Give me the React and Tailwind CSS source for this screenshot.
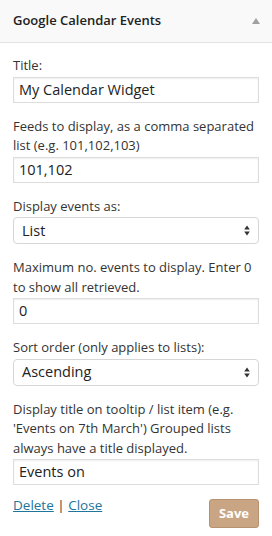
import React from "react";

const SelectArrows = () => (
  <svg width="6" height="11" viewBox="0 0 6 11" className="text-[#333]">
    <path d="M3 0.5 L5.8 4.5 L0.2 4.5 Z" fill="currentColor" />
    <path d="M3 10.5 L5.8 6.5 L0.2 6.5 Z" fill="currentColor" />
  </svg>
);

// labels keep the line breaks of the original widget
const Field = ({ lines, children }) => (
  <div className="mb-[14px]">
    <label className="block text-[13px] leading-[19.5px] text-[#333] mb-[1px] whitespace-nowrap">
      {lines.map((l, i) => (
        <span key={i} className="block">{l}</span>
      ))}
    </label>
    {children}
  </div>
);

const TextInput = ({ value }) => (
  <div className="h-[26px] border border-[#dddddd] bg-white px-[5px] flex items-center text-[14.5px] text-[#222] shadow-[inset_0_1px_2px_rgba(0,0,0,0.07)]">
    {value}
  </div>
);

const SelectBox = ({ value }) => (
  <div className="h-[27px] border border-[#d6d6d6] rounded-[4px] bg-white pl-[8px] pr-[8px] flex items-center justify-between text-[14.5px] text-[#222]">
    <span>{value}</span>
    <SelectArrows />
  </div>
);

export default function App() {
  return (
    <div className="w-[272px] h-[536px] bg-white font-['Open_Sans',sans-serif] overflow-hidden">
      <div className="h-[43px] bg-[#f9f9f9] border-b border-[#e3e3e3] flex items-center justify-between pl-[13px] pr-[12px]">
        <span className="text-[13px] font-semibold text-[#222]">Google Calendar Events</span>
        <svg width="8" height="6" viewBox="0 0 8 6">
          <path d="M4 0 L8 6 L0 6 Z" fill="#a0a0a0" />
        </svg>
      </div>
      <div className="px-[13px] pt-[13px]">
        <Field lines={["Title:"]}>
          <TextInput value="My Calendar Widget" />
        </Field>
        <Field lines={["Feeds to display, as a comma separated", "list (e.g. 101,102,103)"]}>
          <TextInput value="101,102" />
        </Field>
        <Field lines={["Display events as:"]}>
          <SelectBox value="List" />
        </Field>
        <Field lines={["Maximum no. events to display. Enter 0", "to show all retrieved."]}>
          <TextInput value="0" />
        </Field>
        <Field lines={["Sort order (only applies to lists):"]}>
          <SelectBox value="Ascending" />
        </Field>
        <Field
          lines={[
            "Display title on tooltip / list item (e.g.",
            "'Events on 7th March') Grouped lists",
            "always have a title displayed.",
          ]}
        >
          <TextInput value="Events on" />
        </Field>
        <div className="flex items-start justify-between">
          <div className="text-[13.5px] leading-[19.5px] text-[#333] -mt-[3px]">
            <a href="#" className="text-[#21759b] underline">Delete</a>
            <span> | </span>
            <a href="#" className="text-[#21759b] underline">Close</a>
          </div>
          <button className="h-[29px] w-[50px] rounded-[3px] bg-[#c9a584] border border-[#b8916e] text-white font-bold text-[13px]">
            Save
          </button>
        </div>
      </div>
    </div>
  );
}
